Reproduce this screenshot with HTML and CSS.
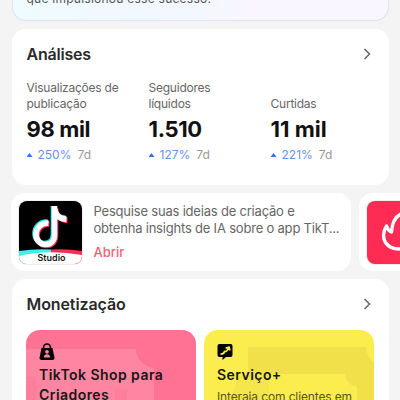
FILE: index.html
```html
<!DOCTYPE html>
<html lang="pt-BR">
<head>
<meta charset="utf-8">
<title>Análises</title>
<link rel="stylesheet" href="styles.css">
</head>
<body>
<main class="page">
  <section class="banner"><p>que impulsionou esse sucesso.</p></section>

  <section class="card analytics">
    <header class="card-head">
      <h2 class="t-analises">Análises</h2>
      <svg class="chevron" viewBox="0 0 8 12"><path d="M1.5 1 6.5 6l-5 5"/></svg>
    </header>
    <div class="stats">
      <div class="stat">
        <p class="label">Visualizações de<br>publicação</p>
        <p class="value">98 mil</p>
        <p class="trend"><i class="up"></i><b>250%</b><span>7d</span></p>
      </div>
      <div class="stat">
        <p class="label">Seguidores<br>líquidos</p>
        <p class="value">1.510</p>
        <p class="trend"><i class="up"></i><b>127%</b><span>7d</span></p>
      </div>
      <div class="stat">
        <p class="label">Curtidas</p>
        <p class="value wide">11 mil</p>
        <p class="trend"><i class="up"></i><b>221%</b><span>7d</span></p>
      </div>
    </div>
  </section>

  <section class="carousel">
    <article class="promo">
      <div class="app-icon">
        <svg viewBox="0 0 63 63">
          <rect width="63" height="63" fill="#000"/>
          <g fill="none" stroke-width="5.6">
            <path stroke="#25e6e2" d="M28.500 21.200C21 20.500 16 26 16 32.500C16 38.500 20.500 42.500 25.500 42.500C31 42.500 34.500 38.500 34.500 33V5M34.500 6C35 13 39.500 17 46.500 17.400"/>
            <path stroke="#fe2c55" d="M30.500 23.200C23 22.500 18 28 18 34.500C18 40.500 22.500 44.500 27.500 44.500C33 44.500 36.500 40.500 36.500 35V7M36.500 8C37 15 41.500 19 48.500 19.400"/>
            <path stroke="#fff" d="M29.500 22.200C22 21.500 17 27 17 33.500C17 39.500 21.500 43.500 26.500 43.500C32 43.500 35.500 39.500 35.500 34V5M35.500 7C36 14 40.500 18 47.500 18.400"/>
          </g>
          <path d="M0 50Q16 47.500 32 48.500V63H0Z" fill="#42eee9"/>
          <path d="M32 48.500Q48 47.500 63 50V63H32Z" fill="#fe2c55"/>
          <path d="M0 55Q30 48 63 54V63H0Z" fill="#fff"/>
        </svg>
        <span>Studio</span>
      </div>
      <div class="promo-text">
        <p>Pesquise suas ideias de criação e<br>obtenha insights de IA sobre o app TikT...</p>
        <a>Abrir</a>
      </div>
    </article>
    <article class="promo">
      <div class="app-icon flame">
        <svg viewBox="0 0 63 63">
          <path d="M34 13C28 16 25 23 24.500 31C22 30 20.500 28 19.500 25C15.500 31 16 38 18.500 41.500C21.500 46 26 48 32 48C41 48 47 42 47 34S41 22 34 13Z" fill="none" stroke="#fff" stroke-width="3.400" stroke-linejoin="round"/>
        </svg>
      </div>
    </article>
  </section>

  <section class="card money">
    <header class="card-head">
      <h2 class="t-money">Monetização</h2>
      <svg class="chevron" viewBox="0 0 8 12"><path d="M1.500 1 6.500 6l-5 5"/></svg>
    </header>
    <div class="tiles">
      <article class="tile pink">
        <svg class="backdrop" viewBox="0 0 170 120">
          <path d="M0 19H110A19 19 0 0 0 128 38V120H0Z" fill="#ff86a2"/>
          <path d="M0 47H10V120H0ZM89 57A14 14 0 0 0 101 59V120H89Z" fill="#ff7e9c"/>
        </svg>
        <svg class="glyph" viewBox="0 0 16 18">
          <path d="M4.500 6V4.500a3.500 3.500 0 0 1 7 0V6" fill="none" stroke="#000" stroke-width="1.600"/>
          <path d="M2.500 5h11L15.500 15a2 2 0 0 1-2 2h-11a2 2 0 0 1-2-2Z"/>
          <circle cx="8" cy="8.800" r="1.900" fill="#ff86a2"/><path d="M4.800 14.500c0-4.200 6.400-4.200 6.400 0Z" fill="#ff86a2"/>
        </svg>
        <h3>TikTok Shop para<br>Criadores</h3>
      </article>
      <article class="tile yellow">
        <svg class="backdrop" viewBox="0 0 170 120">
          <path d="M33 45H65V70L60 120H0Q26 90 26 66Q33 58 33 45Z" fill="#f5e74b"/>
          <path d="M44 17H162Q163 28 170 32V120H153V57A14 14 0 0 1 141 44H44Z" fill="#f1e04a"/>
        </svg>
        <svg class="glyph" viewBox="0 0 16 18">
          <path d="M2.500 1h11a2 2 0 0 1 2 2v9a2 2 0 0 1-2 2H9l-3.500 3v-3h-3a2 2 0 0 1-2-2V3a2 2 0 0 1 2-2Z"/>
          <path d="M3.500 11.200Q7 11 7.500 8.500Q10 9 11.500 5M8.500 5.200 12 4 13 7.500" fill="none" stroke="#faed4d" stroke-width="1.700"/>
        </svg>
        <h3>Serviço+</h3>
        <p>Interaja com clientes em</p>
      </article>
    </div>
  </section>
</main>
</body>
</html>
```
FILE: styles.css
```css
* { box-sizing: border-box; margin: 0; padding: 0; }
body { width: 400px; height: 400px; overflow: hidden; background: #f4f4f4; font-family: Inter, "Liberation Sans", sans-serif; color: #171717; }
.page { height: 400px; overflow: hidden; padding: 0 11px; display: flex; flex-direction: column; gap: 8px; }
.page > * { flex: none; }
.banner { height: 21px; border: 1px solid #e0dffc; border-top: 0; border-radius: 0 0 14px 14px; background: linear-gradient(100deg, #effbff, #f3f7ff 50%, #faf6ff 65%, #f9f6ff); overflow: hidden; }
.banner p { margin: -10px 0 0 14px; font-size: 12px; line-height: 18px; letter-spacing: 0.25px; color: #555; white-space: nowrap; }
.card { background: #fff; border-radius: 14px; padding: 0 15px; overflow: hidden; }
.analytics { height: 156px; }
.money { height: 140px; }
.card-head { display: flex; justify-content: space-between; align-items: center; height: 51px; padding-bottom: 1px; }
h2 { font-size: 16px; font-weight: 600; line-height: 20px; color: #2a2a2a; }
.t-analises { letter-spacing: -0.2px; }
.t-money { letter-spacing: -0.1px; }
.chevron { width: 8px; height: 12px; margin-right: 3.5px; fill: none; stroke: #666; stroke-width: 1.5; }
.banner, .card { margin-left: 0.5px; }
.stats { display: grid; grid-template-columns: 122px 122px 100px; align-items: end; }
.label { font-size: 12px; line-height: 16px; letter-spacing: -0.23px; color: #666; white-space: nowrap; }
.value { font-size: 22px; font-weight: 700; line-height: 28px; letter-spacing: -0.35px; margin-top: 3px; color: #111; white-space: nowrap; }
.wide { letter-spacing: 0; }
.trend { display: flex; align-items: center; font-size: 12px; line-height: 16px; margin-top: 4px; }
.trend b { font-weight: 400; color: #6592ea; margin-left: 5px; }
.trend span { color: #999; margin-left: 6px; }
.up { width: 6px; height: 4px; background: #2b78e4; clip-path: polygon(50% 0, 100% 100%, 0 100%); }
.carousel { display: flex; gap: 8px; width: 500px; height: 78px; }
.promo { width: 340px; flex: none; background: #fff; border-radius: 14px; padding: 8px; display: flex; }
.app-icon { position: relative; width: 63px; height: 63px; border-radius: 8px; overflow: hidden; flex: none; box-shadow: 0 0 0 1px #eee; }
.app-icon svg { display: block; width: 63px; height: 63px; }
.app-icon span { position: absolute; left: 2px; right: 0; bottom: 1px; text-align: center; font-size: 9px; line-height: 11px; font-weight: 600; }
.flame { background: #fe2c55; }
.promo-text { margin-left: 11.5px; padding-top: 2px; font-size: 13px; line-height: 17px; color: #666; white-space: nowrap; }
.promo-text p { letter-spacing: -0.2px; }
.promo-text a { display: block; color: #fc5a75; font-weight: 500; margin-top: 7px; }
.tiles { display: grid; grid-template-columns: 170px 170px; gap: 8px; margin-left: -0.5px; }
.tile { position: relative; height: 120px; border-radius: 14px; padding: 13px; overflow: hidden; }
.tile > * { position: relative; }
.tile > .backdrop { position: absolute; left: 0; top: 0; width: 170px; height: 120px; }
.pink { background: #ff7294; }
.yellow { background: #faed4d; }
.glyph { display: block; width: 16px; height: 18px; }
h3 { font-size: 14px; line-height: 20px; font-weight: 600; letter-spacing: 0.45px; margin-top: 4px; white-space: nowrap; }
.tile p { font-size: 12px; line-height: 16px; letter-spacing: -0.13px; color: #59551f; white-space: nowrap; margin-top: 4px; }
```
